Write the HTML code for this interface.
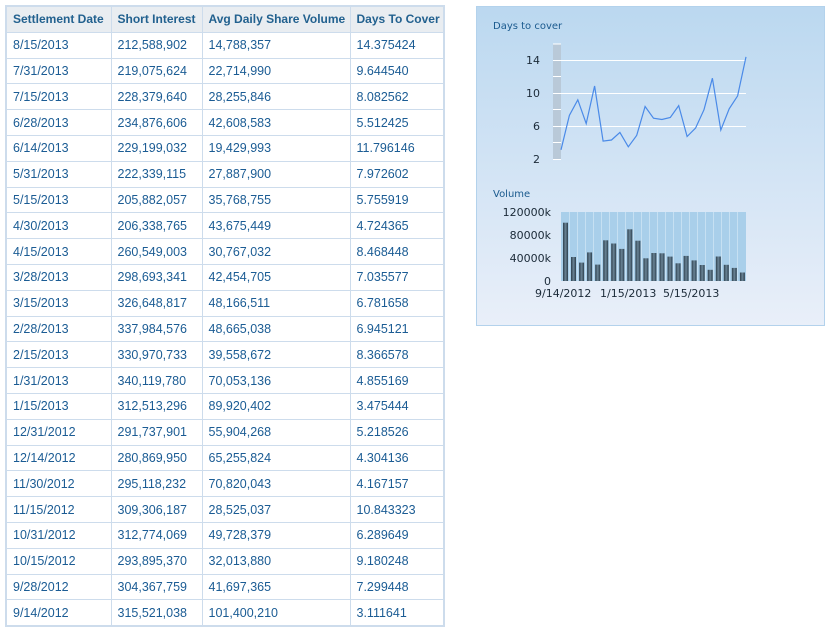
<!DOCTYPE html>
<html><head><style>
body{margin:0;background:#fff;width:833px;height:634px;overflow:hidden;font-family:"Liberation Sans",Arial,sans-serif;}
table{position:absolute;left:5px;top:5px;border-collapse:collapse;border:2px solid #cddcec;font-size:12.5px;color:#1b5c94;table-layout:fixed;width:438px;}
td,th{border:1px solid #cddcec;padding:0 0 0 6px;text-align:left;height:24.8px;white-space:nowrap;overflow:hidden;}
th{background:#e9edf1;color:#22618f;font-weight:bold;font-size:12px;}
#panel{position:absolute;left:476px;top:6px;width:347px;height:318px;border:1px solid #b3d2ec;background:linear-gradient(#bbd8f0,#e9eff9);}
</style></head><body>
<table>
<colgroup><col style="width:105px"><col style="width:91px"><col style="width:148px"><col style="width:94px"></colgroup>
<tr><th>Settlement Date</th><th>Short Interest</th><th>Avg Daily Share Volume</th><th>Days To Cover</th></tr>
<tr><td>8/15/2013</td><td>212,588,902</td><td>14,788,357</td><td>14.375424</td></tr>
<tr><td>7/31/2013</td><td>219,075,624</td><td>22,714,990</td><td>9.644540</td></tr>
<tr><td>7/15/2013</td><td>228,379,640</td><td>28,255,846</td><td>8.082562</td></tr>
<tr><td>6/28/2013</td><td>234,876,606</td><td>42,608,583</td><td>5.512425</td></tr>
<tr><td>6/14/2013</td><td>229,199,032</td><td>19,429,993</td><td>11.796146</td></tr>
<tr><td>5/31/2013</td><td>222,339,115</td><td>27,887,900</td><td>7.972602</td></tr>
<tr><td>5/15/2013</td><td>205,882,057</td><td>35,768,755</td><td>5.755919</td></tr>
<tr><td>4/30/2013</td><td>206,338,765</td><td>43,675,449</td><td>4.724365</td></tr>
<tr><td>4/15/2013</td><td>260,549,003</td><td>30,767,032</td><td>8.468448</td></tr>
<tr><td>3/28/2013</td><td>298,693,341</td><td>42,454,705</td><td>7.035577</td></tr>
<tr><td>3/15/2013</td><td>326,648,817</td><td>48,166,511</td><td>6.781658</td></tr>
<tr><td>2/28/2013</td><td>337,984,576</td><td>48,665,038</td><td>6.945121</td></tr>
<tr><td>2/15/2013</td><td>330,970,733</td><td>39,558,672</td><td>8.366578</td></tr>
<tr><td>1/31/2013</td><td>340,119,780</td><td>70,053,136</td><td>4.855169</td></tr>
<tr><td>1/15/2013</td><td>312,513,296</td><td>89,920,402</td><td>3.475444</td></tr>
<tr><td>12/31/2012</td><td>291,737,901</td><td>55,904,268</td><td>5.218526</td></tr>
<tr><td>12/14/2012</td><td>280,869,950</td><td>65,255,824</td><td>4.304136</td></tr>
<tr><td>11/30/2012</td><td>295,118,232</td><td>70,820,043</td><td>4.167157</td></tr>
<tr><td>11/15/2012</td><td>309,306,187</td><td>28,525,037</td><td>10.843323</td></tr>
<tr><td>10/31/2012</td><td>312,774,069</td><td>49,728,379</td><td>6.289649</td></tr>
<tr><td>10/15/2012</td><td>293,895,370</td><td>32,013,880</td><td>9.180248</td></tr>
<tr><td>9/28/2012</td><td>304,367,759</td><td>41,697,365</td><td>7.299448</td></tr>
<tr><td>9/14/2012</td><td>315,521,038</td><td>101,400,210</td><td>3.111641</td></tr>
</table>
<div id="panel"></div>
<svg width="833" height="634" style="position:absolute;left:0;top:0" font-family="DejaVu Sans, sans-serif" font-size="11">
<text x="493" y="29" fill="#1a5a8e" font-size="10">Days to cover</text>
<rect x="553" y="44" width="8" height="115" fill="#b9c9d8"/>
<g stroke="#fff" stroke-width="1">
<line x1="553" y1="44" x2="561" y2="44"/><line x1="553" y1="76.5" x2="561" y2="76.5"/><line x1="553" y1="109.5" x2="561" y2="109.5"/><line x1="553" y1="142.5" x2="561" y2="142.5"/>
<line x1="553" y1="60.5" x2="746" y2="60.5"/><line x1="553" y1="93.5" x2="746" y2="93.5"/><line x1="553" y1="126.5" x2="746" y2="126.5"/><line x1="553" y1="159.5" x2="561" y2="159.5"/>
</g>
<g fill="#1b2a38" text-anchor="end"><text x="540" y="64">14</text><text x="540" y="97">10</text><text x="540" y="130">6</text><text x="540" y="163">2</text></g>
<polyline fill="none" stroke="#4a8ae8" stroke-width="1.2" points="561,149.8 569.4,115.3 577.8,99.8 586.2,123.6 594.6,86 603.1,141.1 611.5,140 619.9,132.4 628.3,146.8 636.7,135.4 645.1,106.5 653.5,118.2 661.9,119.5 670.3,117.5 678.7,105.6 687.1,136.5 695.6,128 704,109.7 712.4,78.2 720.8,130 729.2,108.8 737.6,95.9 746,56.9"/>
<text x="493" y="197" fill="#1a5a8e" font-size="10">Volume</text>
<rect x="561" y="212" width="185" height="69" fill="#a9cfea"/>
<g stroke="#c6e0f2" stroke-width="1">
<line x1="569.5" y1="212" x2="569.5" y2="281"/><line x1="577.5" y1="212" x2="577.5" y2="281"/><line x1="585.5" y1="212" x2="585.5" y2="281"/><line x1="593.5" y1="212" x2="593.5" y2="281"/><line x1="601.5" y1="212" x2="601.5" y2="281"/><line x1="609.5" y1="212" x2="609.5" y2="281"/><line x1="617.5" y1="212" x2="617.5" y2="281"/><line x1="625.5" y1="212" x2="625.5" y2="281"/><line x1="633.5" y1="212" x2="633.5" y2="281"/><line x1="641.5" y1="212" x2="641.5" y2="281"/><line x1="649.5" y1="212" x2="649.5" y2="281"/><line x1="657.5" y1="212" x2="657.5" y2="281"/><line x1="665.5" y1="212" x2="665.5" y2="281"/><line x1="673.5" y1="212" x2="673.5" y2="281"/><line x1="681.5" y1="212" x2="681.5" y2="281"/><line x1="689.5" y1="212" x2="689.5" y2="281"/><line x1="697.5" y1="212" x2="697.5" y2="281"/><line x1="705.5" y1="212" x2="705.5" y2="281"/><line x1="713.5" y1="212" x2="713.5" y2="281"/><line x1="721.5" y1="212" x2="721.5" y2="281"/><line x1="729.5" y1="212" x2="729.5" y2="281"/><line x1="737.5" y1="212" x2="737.5" y2="281"/>
</g>
<defs><linearGradient id="b" x1="0" x2="1"><stop offset="0" stop-color="#2c3e4c"/><stop offset=".5" stop-color="#6a8496"/><stop offset="1" stop-color="#2c3e4c"/></linearGradient></defs>
<g fill="url(#b)">
<rect x="563" y="222.7" width="5" height="58.3"/><rect x="571" y="257" width="5" height="24"/><rect x="579.1" y="262.6" width="5" height="18.4"/><rect x="587.1" y="252.4" width="5" height="28.6"/><rect x="595.2" y="264.6" width="5" height="16.4"/><rect x="603.2" y="240.3" width="5" height="40.7"/><rect x="611.2" y="243.5" width="5" height="37.5"/><rect x="619.3" y="248.9" width="5" height="32.1"/><rect x="627.3" y="229.3" width="5" height="51.7"/><rect x="635.4" y="240.7" width="5" height="40.3"/><rect x="643.4" y="258.3" width="5" height="22.7"/><rect x="651.4" y="253" width="5" height="28"/><rect x="659.5" y="253.3" width="5" height="27.7"/><rect x="667.5" y="256.6" width="5" height="24.4"/><rect x="675.6" y="263.3" width="5" height="17.7"/><rect x="683.6" y="255.9" width="5" height="25.1"/><rect x="691.6" y="260.4" width="5" height="20.6"/><rect x="699.7" y="265" width="5" height="16"/><rect x="707.7" y="269.8" width="5" height="11.2"/><rect x="715.8" y="256.5" width="5" height="24.5"/><rect x="723.8" y="264.8" width="5" height="16.2"/><rect x="731.8" y="267.9" width="5" height="13.1"/><rect x="739.9" y="272.5" width="5" height="8.5"/>
</g>
<g fill="#1b2a38" text-anchor="end"><text x="551" y="216">120000k</text><text x="551" y="239">80000k</text><text x="551" y="262">40000k</text><text x="551" y="285">0</text></g>
<g fill="#1b2a38"><text x="535" y="297">9/14/2012</text><text x="600" y="297">1/15/2013</text><text x="663" y="297">5/15/2013</text></g>
</svg>
</body></html>
